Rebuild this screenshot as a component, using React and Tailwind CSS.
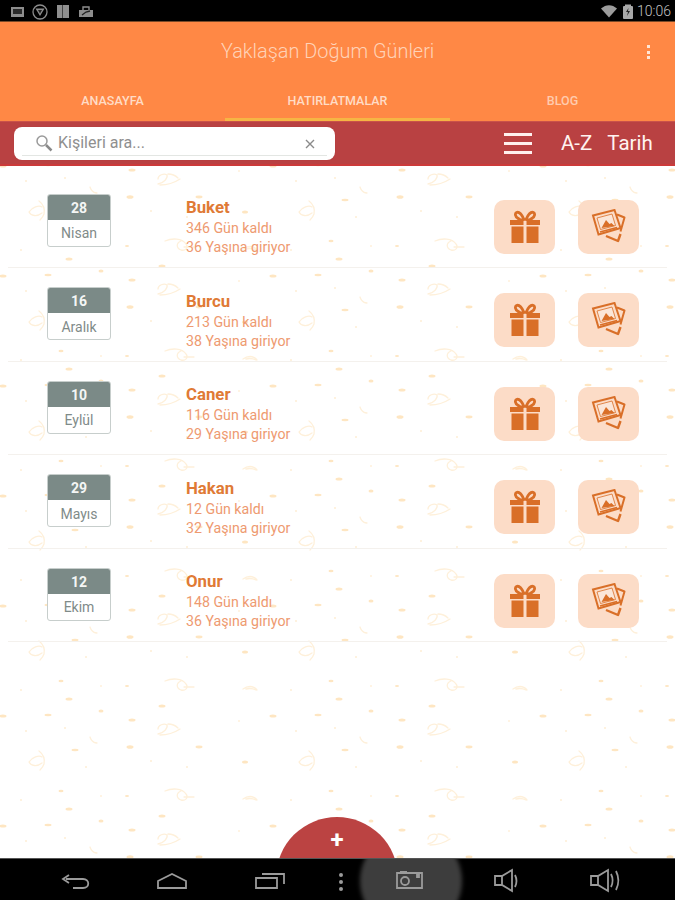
import React from "react";

const people = [
  { d: "28", m: "Nisan", n: "Buket", g: "346 Gün kaldı", y: "36 Yaşına giriyor" },
  { d: "16", m: "Aralık", n: "Burcu", g: "213 Gün kaldı", y: "38 Yaşına giriyor" },
  { d: "10", m: "Eylül", n: "Caner", g: "116 Gün kaldı", y: "29 Yaşına giriyor" },
  { d: "29", m: "Mayıs", n: "Hakan", g: "12 Gün kaldı", y: "32 Yaşına giriyor" },
  { d: "12", m: "Ekim", n: "Onur", g: "148 Gün kaldı", y: "36 Yaşına giriyor" },
];

function Pattern() {
  const blobs = [
    [86, 27, 1, 0.7], [151, 21, 1, 0.7], [187, 27, 1, 0.7], [245, 22, 3, 1.6], [61, 51, 2.500, 1.300], [101, 56, 0.8, 0.8],
    [127, 56, 2, 1], [21, 60, 1, 0.7], [69, 69, 3.500, 1.600], [101, 81, 2.500, 1.600], [162, 76, 3.500, 1.600], [3, 86, 3.500, 1.600],
    [48, 85, 3.500, 1.200], [132, 90, 3.500, 1.500], [273, 86, 3.500, 1.600], [65, 98, 1, 0.8], [75, 10, 3.500, 1.200], [130, 7, 3.500, 1.800],
    [199, 7, 3.500, 1.400], [239, 91, 0.8, 0.8], [26, 101, 1, 0.7],
  ];
  return (
    <svg className="absolute inset-0 h-full w-full" aria-hidden="true">
      <defs>
        <pattern id="confetti" x="0" y="24" width="270" height="110" patternUnits="userSpaceOnUse">
          {blobs.map(([x, y, a, b], i) => (
            <ellipse key={i} cx={x} cy={y} rx={a} ry={b} fill="#fee6c2" />
          ))}
          <g fill="none" stroke="#fef0da" strokeWidth="1.300" strokeLinecap="round">
            <path d="M39 11c4 3 6 8 5 13-1 3-3 5-4 6M29 22c3-5 10-7 13-5M29 22c2 4 8 5 13 1" />
            <path d="M165 51c7-3 17-3 21 3 3 4-1 7-5 6-5-2-5-7 0-9M184 57l10 0" />
            <path d="M243 59c4-3 10-4 14 1M246 59c4-1 8 0 10 1" />
            <path d="M158 104c6-1 10-6 9-9-3-2-9 0-9 4M160 105c8 0 14-2 20-6M168 94c4 0 8 2 10 4" />
            <path d="M90 -3c1 3 3 6 7 6" />
            <path d="M90 107c1 3 3 6 7 6" />
          </g>
        </pattern>
      </defs>
      <rect width="100%" height="100%" fill="url(#confetti)" />
    </svg>
  );
}

function StatusLeft() {
  return (
    <svg width="100" height="22" viewBox="0 0 100 22" className="shrink-0" aria-hidden="true">
      <rect x="11" y="7" width="13" height="10" fill="#8d8d8d" />
      <rect x="13" y="9" width="9" height="5" fill="#2a2a2a" />
      <circle cx="40" cy="12" r="7" fill="none" stroke="#8d8d8d" strokeWidth="1.300" />
      <path d="M35.500 8.500h9L40 16z" fill="#8d8d8d" />
      <path d="M38 10h4l-2 3.500z" fill="#222" />
      <rect x="57" y="5" width="12" height="13" fill="#8f8f8f" />
      <rect x="62" y="5" width="1" height="13" fill="#444" />
      <path d="M79 10h14v7H79z" fill="#8d8d8d" />
      <path d="M83 10V7h6v3" fill="none" stroke="#8d8d8d" strokeWidth="1.400" />
      <path d="M82 15l4-3 4-1" fill="none" stroke="#222" strokeWidth="1.300" />
    </svg>
  );
}

function StatusRight() {
  return (
    <div className="ml-auto mr-[4px] flex items-center">
      <svg width="34" height="22" viewBox="0 0 34 22" aria-hidden="true">
        <path d="M0 8.500c5-4.500 11-4.500 16 0l-8 9z" fill="#9c9c9c" />
        <rect x="22" y="6" width="10" height="13" rx="1" fill="#a8a8a8" />
        <rect x="24" y="4.500" width="6" height="2" fill="#a8a8a8" />
        <path d="M27.500 8l-2.500 4h2l-1 4 3-5h-2z" fill="#222" />
      </svg>
      <span className="ml-[2px] text-[14px] leading-none font-light text-[#c4c4c4]">10:06</span>
    </div>
  );
}

function Gift() {
  return (
    <svg width="32" height="34" viewBox="0 0 32 34" aria-hidden="true">
      <path d="M15 9.500C13 5 10 1.500 7.500 2.500c-2 1-1 4 1 5.500l3 2zM17 9.500c2-4.500 5-8 7.500-7 2 1 1 4-1 5.500l-3 2z" fill="none" stroke="#d96f28" strokeWidth="2.800" />
      <path d="M1 10h13.500v5H1zM17.500 10H31v5H17.500zM2.500 16.500h12V33h-12zM17.500 16.500h12V33h-12z" fill="#d96f28" />
    </svg>
  );
}

function Photos() {
  return (
    <svg width="36" height="36" viewBox="0 0 36 36" aria-hidden="true">
      <g fill="none" stroke="#d96f28" strokeLinejoin="round">
        <path d="M26 5.500l7.500 3-4 14" strokeWidth="2" />
        <path d="M15 27l12 5 2.500-7" strokeWidth="2.400" />
      </g>
      <path d="M2 6.500L23.500 1l6 18-22 6.500z" fill="#fcdcc7" stroke="#d96f28" strokeWidth="2" />
      <path d="M6 9l15-4 3.500 11.500-15 4z" fill="#fbe6d8" stroke="#d96f28" strokeWidth="0.800" />
      <path d="M10.500 19l4.500-8 3.500 4 2-1 3 3z" fill="#d96f28" />
      <path d="M9 23l17-4.500" stroke="#d96f28" strokeWidth="1.600" />
    </svg>
  );
}

function Row({ p }) {
  return (
    <div className="mx-[8px] flex h-[93.5px] shrink-0 items-start border-b border-[#f4f1ed] pl-[39px] pr-[28px] pt-[19px]">
      <div className="flex h-[53px] w-[64px] shrink-0 flex-col overflow-hidden rounded-[3px] border-[1.5px] border-[#c7cecc] bg-white">
        <div className="flex h-[25px] items-center justify-center bg-[#7b8a87] pt-[2px] text-[14px] font-bold text-[#f4f6f5]">{p.d}</div>
        <div className="flex flex-1 items-center justify-center pt-[2px] text-[14px] text-[#7f8b89]">{p.m}</div>
      </div>
      <div className="ml-[75px] flex flex-col">
        <div className="mt-[3.5px] text-[16.800px] leading-[20px] font-bold text-[#e07a35]">{p.n}</div>
        <div className="mt-[2px] text-[14.200px] leading-[19px] text-[#ee9a70]">{p.g}</div>
        <div className="text-[14.200px] leading-[19px] text-[#ee9a70]">{p.y}</div>
      </div>
      <div className="ml-auto mt-[6px] flex gap-[23px]">
        <div className="flex h-[54px] w-[61px] items-center justify-center rounded-[10px] bg-[#fcdcc7]"><Gift /></div>
        <div className="flex h-[54px] w-[61px] items-center justify-center rounded-[10px] bg-[#fcdcc7]"><Photos /></div>
      </div>
    </div>
  );
}

export default function App() {
  return (
    <div className="flex h-[900px] w-[675px] flex-col overflow-hidden bg-white font-['Roboto',sans-serif]">
      <div className="flex h-[22px] shrink-0 items-center border-b border-[#7a4a28] bg-black"><StatusLeft /><StatusRight /></div>
      <header className="shrink-0 bg-[#ff8845]">
        <div className="flex h-[60px] items-center pl-[221px] pr-[25px]">
          <span className="text-[19.900px] font-light text-[#ffd3b8]">Yaklaşan Doğum Günleri</span>
          <span className="ml-auto flex flex-col gap-[2.500px]">
            <i className="block h-[3px] w-[3px] bg-[#ffe6d6]" />
            <i className="block h-[3px] w-[3px] bg-[#ffe6d6]" />
            <i className="block h-[3px] w-[3px] bg-[#ffe6d6]" />
          </span>
        </div>
        <div className="flex h-[39px] text-[12.500px] font-medium">
          <div className="flex flex-1 items-center justify-center text-[#ffdcc6]">ANASAYFA</div>
          <div className="flex flex-1 items-center justify-center border-b-[3px] border-[#f6b544] pt-[3px] text-[#ffdcc6]">HATIRLATMALAR</div>
          <div className="flex flex-1 items-center justify-center text-[#ffcbae]">BLOG</div>
        </div>
      </header>
      <div className="flex h-[45px] shrink-0 items-center border-t border-[#c9524a] border-b-2 border-b-[#cc3a3a] bg-[#b94142] pl-[14px] text-[#fff3f0]">
        <div className="relative flex h-[33px] w-[321px] items-center rounded-[8px] bg-white pl-[21px] pr-[20px] shadow-[0_0_1px_#a33]">
          <svg width="18" height="18" viewBox="0 0 18 18" aria-hidden="true">
            <circle cx="7" cy="7" r="5" fill="none" stroke="#9a9a9a" strokeWidth="1.500" />
            <path d="M11 11l5.500 5.500" stroke="#8a8a8a" strokeWidth="2.500" />
          </svg>
          <span className="ml-[5px] text-[16px] text-[#8f8f8f]">Kişileri ara...</span>
          <svg className="ml-auto mt-[2px]" width="10" height="10" viewBox="0 0 10 10" aria-hidden="true">
            <path d="M1 1l8 8M9 1l-8 8" stroke="#8a8a8a" strokeWidth="1.400" />
          </svg>
          <div className="absolute bottom-[4px] left-[8px] right-[8px] h-[1px] bg-[#e3e6e3]" />
        </div>
        <div className="ml-[169px] flex flex-col gap-[6px]">
          <i className="block h-[3px] w-[28px] bg-[#fff0ee]" />
          <i className="block h-[3px] w-[28px] bg-[#fff0ee]" />
          <i className="block h-[3px] w-[28px] bg-[#fff0ee]" />
        </div>
        <span className="ml-[29px] text-[20.500px]">A-Z</span>
        <span className="ml-[15px] text-[20.500px]">Tarih</span>
      </div>
      <main className="relative min-h-0 flex-1 bg-white">
        <Pattern />
        <div className="relative flex flex-col pt-[8.5px]">
          {people.map((p) => <Row key={p.n} p={p} />)}
        </div>
        <div className="absolute left-[276px] top-[651px] flex h-[122px] w-[122px] justify-center rounded-full bg-[#bb4342] pt-[12px] text-[24px] leading-[22px] font-bold text-white">+</div>
      </main>
      <nav className="relative z-10 h-[42px] shrink-0 overflow-hidden border-t border-[#555] bg-black">
        <div className="absolute left-[360px] top-[-28px] h-[100px] w-[102px] rounded-full bg-[#3d3d3d] blur-[2px]" />
        <svg className="relative" width="675" height="42" viewBox="0 858 675 42" fill="none" stroke="#9b9b9b" strokeWidth="1.800" aria-hidden="true">
          <path d="M66 878h17c7 0 7 9 0 9H73M69 874l-6 4 6 4" />
          <path d="M158 887v-7l14-7 14 7v7z" />
          <path d="M256 877h21v10h-21zM262 873h22v10" />
          <path d="M341 874v.1M341 881v.1M341 888v.1" strokeWidth="4" strokeLinecap="round" />
          <path d="M397 872h25v15h-25zM400 871h7" />
          <circle cx="405" cy="880" r="4" />
          <path d="M417 874h2v2h-2z" fill="#9b9b9b" />
          <path d="M495 875h7l10-6v21l-10-6h-7zM502 875v9M515 874c2 4 2 8 0 12" />
          <path d="M591 875h7l10-6v21l-10-6h-7zM598 875v9M611 873c2 4 2 9 0 13M616 870c3 6 3 13 0 19" />
        </svg>
      </nav>
    </div>
  );
}
